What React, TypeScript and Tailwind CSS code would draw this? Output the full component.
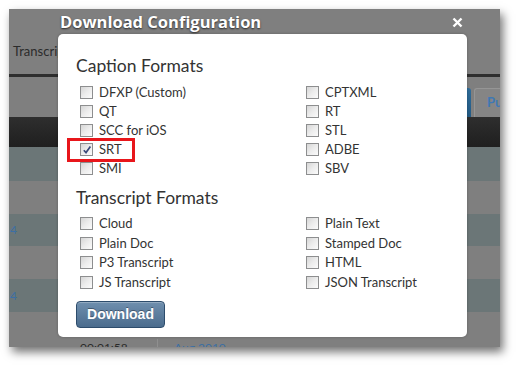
const captionLeft = ["DFXP (Custom)", "QT", "SCC for iOS", "SRT", "SMI"];
const captionRight = ["CPTXML", "RT", "STL", "ADBE", "SBV"];
const transcriptLeft = ["Cloud", "Plain Doc", "P3 Transcript", "JS Transcript"];
const transcriptRight = ["Plain Text", "Stamped Doc", "HTML", "JSON Transcript"];

function Check({ label, checked = false, marked = false }: { label: string; checked?: boolean; marked?: boolean }) {
  return (
    <div className="relative flex h-[19px] items-center pl-[4px]">
      {/* red highlight box around the chosen format */}
      {marked && <div className="absolute left-[-9px] top-[-2px] h-[24px] w-[68px] border-[3px] border-[#e8161b]"></div>}
      <span className="relative flex h-[13px] w-[13px] shrink-0 items-center justify-center border border-[#8d8e8f] bg-gradient-to-br from-[#d6d6d6] via-[#ececec] to-[#fbfbfb]">
        {checked && (
          <svg width="10" height="10" viewBox="0 0 10 10">
            <path d="M1.8 5.2 L4 7.6 L8.4 1.6" fill="none" stroke="#3b4a7a" strokeWidth="1.7" />
          </svg>
        )}
      </span>
      <span className="ml-[6px] text-[13px] leading-[19px] text-[#333]">{label}</span>
    </div>
  );
}

function Group({ left, right, checkedLabel }: { left: string[]; right: string[]; checkedLabel?: string }) {
  return (
    <div className="grid grid-cols-[226px_1fr]">
      <div className="flex flex-col">
        {left.map((l) => (
          <Check key={l} label={l} checked={l === checkedLabel} marked={l === checkedLabel} />
        ))}
      </div>
      <div className="flex flex-col">
        {right.map((l) => (
          <Check key={l} label={l} />
        ))}
      </div>
    </div>
  );
}

export default function App() {
  return (
    <main className="h-[366px] w-[519px] bg-white pl-[9px] pt-[9px] font-['Lato',sans-serif]">
      <div className="relative h-[338px] w-[491px] overflow-hidden bg-[#7f7f7f] shadow-[3px_5px_9px_rgba(0,0,0,0.55)]">
        {/* --- page behind the overlay --- */}
        <div className="flex h-[65px] items-end pb-[13px] pl-[4px] text-[13px] text-[#2b2b2b]">Transcripts</div>
        <div className="h-[3px] bg-[#2e2e2e]"></div>
        <div className="flex h-[40px] items-end justify-end gap-[3px] pb-0">
          <div className="h-[29px] w-[60px] rounded-t-[3px] bg-gradient-to-b from-[#2f6d9b] to-[#235a84]"></div>
          <div className="flex h-[29px] w-[26px] items-center rounded-tl-[3px] border border-b-0 border-r-0 border-[#959595] bg-[#858585] pl-[12px] text-[13px] font-bold text-[#3f78b4]">Pu</div>
        </div>
        <div className="h-[30px] bg-gradient-to-b from-[#2e2e2e] to-[#1f1f1f]"></div>
        <div className="h-[34px] bg-[#6b7677]"></div>
        <div className="h-[33px] bg-[#7f7f7f]"></div>
        <div className="flex h-[32px] items-center bg-[#6b7677] pl-[1px] text-[12px] text-[#3d6fa3]">4</div>
        <div className="h-[33px] bg-[#7f7f7f]"></div>
        <div className="flex h-[33px] items-center bg-[#6b7677] pl-[1px] text-[12px] text-[#3d6fa3]">4</div>
        <div className="flex h-[35px] bg-[#7f7f7f] pt-[27px] text-[12px] text-[#2b2b2b]">
          <span className="w-[149px] border-r border-[#8f8f8f] pl-[71px]">00:01:58</span>
          <span className="pl-[16px] text-[#3d6fa3]">Aug 2010</span>
        </div>

        {/* --- dialog --- */}
        <div className="absolute left-[49px] top-0 w-[409px]">
          <div className="flex h-[25px] items-center justify-between pl-[2px] pr-[4px]">
            <span className="font-['Open_Sans',sans-serif] text-[16.5px] font-bold leading-[25px] text-white [text-shadow:0_1px_2px_rgba(0,0,0,0.7)]">Download Configuration</span>
            <svg width="11" height="11" viewBox="0 0 11 11" className="mt-[1px]">
              <path d="M1.5 1.5 L9.5 9.5 M9.5 1.5 L1.5 9.5" stroke="white" strokeWidth="2.4" />
            </svg>
          </div>
          <div className="flex h-[303px] flex-col rounded-[5px] bg-white px-[18px] pt-[20px] shadow-[0_0_3px_rgba(0,0,0,0.25)]">
            <h2 className="text-[17.5px] leading-[24px] text-[#333]">Caption Formats</h2>
            <div className="mt-[5px]">
              <Group left={captionLeft} right={captionRight} checkedLabel="SRT" />
            </div>
            <h2 className="mt-[8px] text-[17.5px] leading-[24px] text-[#333]">Transcript Formats</h2>
            <div className="mt-[4px] [&_div.relative]:h-[19.5px]">
              <Group left={transcriptLeft} right={transcriptRight} />
            </div>
            <div className="mt-[9px]">
              <button className="h-[27px] w-[89px] rounded-[4px] border border-[#2d4c6c] bg-gradient-to-b from-[#6f8fae] to-[#4b6c8d] font-['Liberation_Sans',sans-serif] text-[14px] font-bold text-white shadow-[inset_0_1px_0_rgba(255,255,255,0.25)] [text-shadow:0_-1px_0_rgba(0,0,0,0.35)]">
                Download
              </button>
            </div>
          </div>
        </div>
      </div>
    </main>
  );
}
